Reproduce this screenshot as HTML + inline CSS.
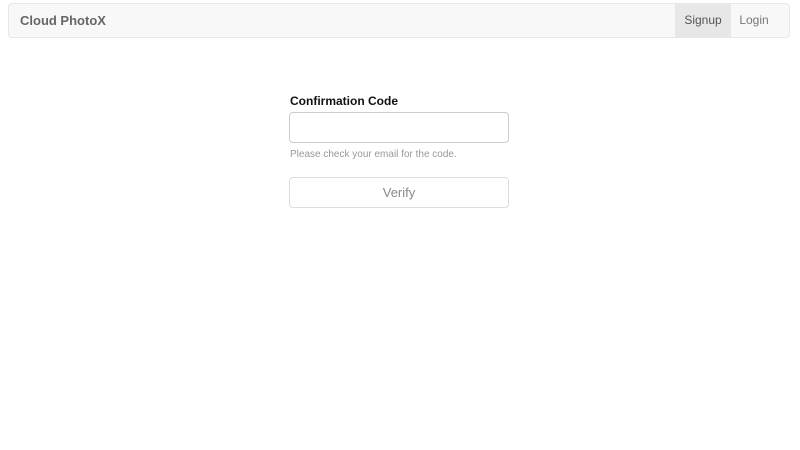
<!DOCTYPE html>
<html><head><style>
body{margin:0;background:#fff;font-family:"Liberation Sans",sans-serif;}
.nav{position:absolute;left:8px;top:3px;width:780px;height:33px;background:#f8f8f8;border:1px solid #e7e7e7;border-radius:4px;}
.brand{position:absolute;left:11px;top:9px;font-size:13px;font-weight:bold;color:#666;}
.sg{position:absolute;left:666px;top:0;width:56px;height:33px;background:#e7e7e7;color:#555;font-size:12px;line-height:33px;text-align:center;}
.lg{position:absolute;left:722px;top:0;width:46px;height:33px;color:#777;font-size:12px;line-height:33px;text-align:center;}
label{position:absolute;left:290px;top:94px;font-size:12px;font-weight:bold;color:#111;}
.in{position:absolute;left:289px;top:112px;width:218px;height:29px;border:1px solid #ccc;border-radius:4px;}
.help{position:absolute;left:290px;top:149px;font-size:10px;color:#999;}
.btn{position:absolute;left:289px;top:177px;width:218px;height:29px;border:1px solid #ddd;border-radius:4px;color:#888;font-size:13px;line-height:29px;text-align:center;}
</style></head><body>
<div class="nav"><div class="brand">Cloud PhotoX</div><div class="sg">Signup</div><div class="lg">Login</div></div>
<label>Confirmation Code</label>
<div class="in"></div>
<div class="help">Please check your email for the code.</div>
<div class="btn">Verify</div>
</body></html>
